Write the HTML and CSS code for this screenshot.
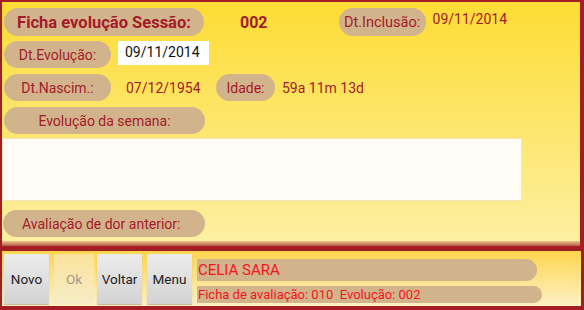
FILE: index.html
```html
<!doctype html>
<html lang="pt">
<head>
<meta charset="utf-8" />
<title>Ficha evolução</title>
<link rel="stylesheet" href="styles.css">
</head>
<body>

<div class="screen">

<section class="form">
	<div class="scroll">
		<div class="row r1">
			<span class="pill title">Ficha evolução Sessão:</span>
			<span class="session">002</span>
			<span class="pill incl">Dt.Inclusão:</span>
			<span class="value top">09/11/2014</span>
		</div>
		<div class="row r2">
			<span class="pill short">Dt.Evolução:</span>
			<span class="input">09/11/2014</span>
		</div>
		<div class="row r3">
			<span class="pill short">Dt.Nascim.:</span>
			<span class="value birth">07/12/1954</span>
			<span class="pill age">Idade:</span>
			<span class="value">59a 11m 13d</span>
		</div>
		<div class="row r4">
			<span class="pill wide center">Evolução da semana:</span>
		</div>
		<div class="textarea"></div>
		<div class="row r5">
			<span class="pill wide left">Avaliação de dor anterior:</span>
		</div>
	</div>
	<div class="fade"></div>
</section>

<section class="bar">
	<div class="buttons">
		<button class="btn">Novo</button>
		<button class="btn off">Ok</button>
		<button class="btn back">Voltar</button>
		<button class="btn menu">Menu</button>
	</div>
	<div class="patient">
		<span class="name">CELIA SARA</span>
		<span class="info">Ficha de avaliação: 010&nbsp;&nbsp;Evolução: 002</span>
	</div>
</section>

</div>

</body>
</html>
```

FILE: styles.css
```css
:root {
	--red: #a31d25;
	--ink: #a51a2a;
	--tan: #d2b48c;
	font-family: Roboto, "Liberation Sans", sans-serif;
}

body, html {
	margin: 0;
	padding: 0;
}

.screen {
	width: 584px;
	height: 310px;
	overflow: hidden;
	background: var(--red);
}

/* top form */

.form {
	position: relative;
	height: 244px;
	margin: 2px 4px 0 2px;
	background: linear-gradient(#fddc34, #fdf0a4);
	overflow: hidden;
}

.scroll {
	padding: 6px 0 0 2px;
}

.row {
	display: flex;
	align-items: center;
	height: 27px;
	color: var(--ink);
	font-size: 14px;
}

.r1 { height: 28px; }
.r2 { margin-top: 5px; }
.r3, .r4 { margin-top: 6px; }
.r5 { margin-top: 10px; margin-left: -1px; }

.pill {
	display: flex;
	align-items: center;
	justify-content: center;
	box-sizing: border-box;
	height: 100%;
	border-radius: 14px;
	background: var(--tan);
	color: var(--ink);
	white-space: nowrap;
}

.pill.title {
	width: 200px;
	font-size: 16.5px;
	font-weight: bold;
}

.session {
	margin-left: 36px;
	font-size: 16px;
	font-weight: bold;
}

.pill.incl {
	width: 87px;
	margin-left: 71px;
	font-size: 14.5px;
}

.value {
	margin-left: 7px;
}

.value.top {
	align-self: flex-start;
	margin-top: 3px;
}

.pill.short {
	width: 107px;
}

.input {
	align-self: flex-start;
	width: 91px;
	height: 24px;
	margin-left: 7px;
	box-sizing: border-box;
	padding: 3px 0 0 7px;
	background: #fff;
	color: #111;
	font-size: 14px;
}

.value.birth {
	margin-left: 15px;
	width: 75px;
}

.pill.age {
	width: 59px;
	margin-left: 15px;
}

.pill.wide {
	width: 201px;
}

.pill.left {
	width: 202px;
	justify-content: flex-start;
	padding-left: 19px;
}

.textarea {
	width: 518px;
	height: 61px;
	margin: 5px 0 0 -1px;
	background: #fffdf6;
	box-shadow: 0 0 0 1px #f1e7b6;
}

.fade {
	position: absolute;
	left: 0;
	right: 0;
	bottom: 0;
	height: 5px;
	background: linear-gradient(rgba(200, 140, 100, .4), #b8584a);
}

/* bottom bar */

.bar {
	display: flex;
	height: 55px;
	margin: 5px 3px 0 2px;
	padding: 3px 0 0 2px;
	background: linear-gradient(#fed54e, #fdf1c6);
	box-sizing: border-box;
}

.buttons {
	display: flex;
	height: 51px;
}

.btn {
	width: 45px;
	height: 50px;
	padding: 0;
	border: 0;
	border-radius: 1px;
	background: linear-gradient(#ececec, #d3d3d3);
	box-shadow: 0 1px 1px rgba(0, 0, 0, .25);
	color: #222;
	font-family: Roboto, "Liberation Sans", sans-serif;
	font-size: 13.5px;
}

.btn.off {
	width: 40px;
	margin-left: 5px;
	background: linear-gradient(#fbe39c, #f6ecc6);
	box-shadow: none;
	color: #a09a8c;
}

.btn.back { margin-left: 3px; }
.btn.menu { margin-left: 5px; }

.patient {
	display: flex;
	flex-direction: column;
	margin-left: 5px;
	padding-top: 5px;
}

.patient span {
	display: flex;
	align-items: center;
	box-sizing: border-box;
	background: var(--tan);
	color: #f2141c;
	white-space: nowrap;
}

.name {
	width: 340px;
	height: 22px;
	padding-left: 1px;
	border-radius: 0 11px 11px 0;
	font-size: 15px;
}

.info {
	width: 345px;
	height: 17px;
	margin-top: 5px;
	padding-left: 1px;
	border-radius: 0 9px 9px 0;
	font-size: 13px;
}
```
